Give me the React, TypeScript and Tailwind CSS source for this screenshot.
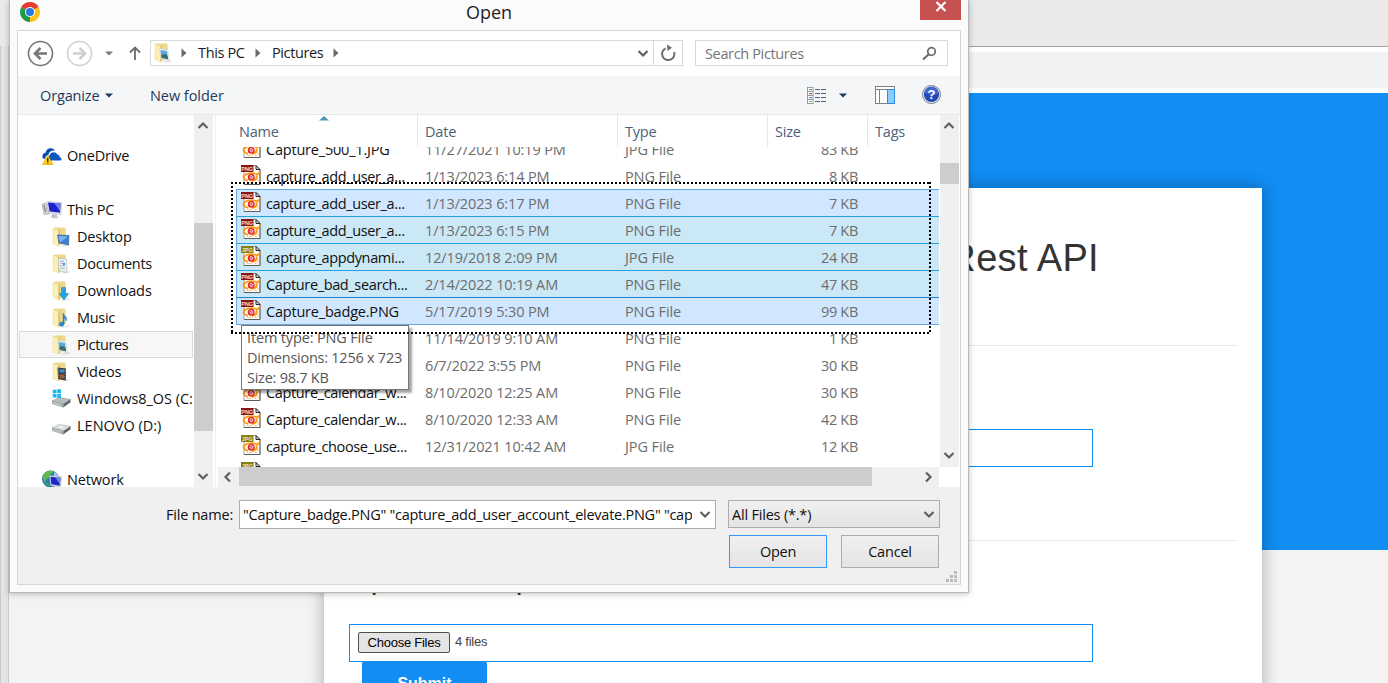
import React from "react";

type SideKind =
  | "onedrive" | "pc" | "desktop" | "documents" | "downloads"
  | "music" | "pictures" | "videos" | "osdrive" | "drive" | "network";

function Folder({ children }: { children?: React.ReactNode }) {
  return (
    <svg width="20" height="20" viewBox="0 0 20 20" className="shrink-0">
      <path d="M9 18.500l9-1.500-1 2-7 .8z" fill="#000" opacity=".1" />
      <path d="M1 1.500 3 .5h9.500l1.200 1V16L6 18z" fill="#eed88a" />
      <path d="M1 1.500 6.500 3.300V19L1 16.500z" fill="#fbefb4" stroke="#ecd68a" strokeWidth=".5" />
      <path d="M6.500 3.300 8 2.800v15.500l-1.500.7z" fill="#dcc070" />
      {children}
    </svg>
  );
}

function SideIcon({ kind }: { kind: SideKind }) {
  switch (kind) {
    case "onedrive":
      return (
        <svg width="20" height="20" viewBox="0 0 20 20" className="shrink-0">
          <path d="M1 12.500C-.5 9.500 1 7 3.500 6.700 4 3.500 7 1.500 10 2.500c1.500.4 2.300 1.200 3 2.200-4-.6-6 1.500-6.500 4C4 9 3 11 3.500 13z" fill="#0a4db0" />
          <path d="M6 14.500c-2-1-1.500-4.500 1.500-4.800C7.800 6 13.500 4.500 15.300 8.500c2 .2 2.500 1.500 2.300 2.800 2.600.6 2.300 3.200.4 3.200z" fill="#0f56bd" />
          <path d="M5.700 9.200 11 18.500H.5z" fill="#ffcf12" stroke="#e0a500" strokeWidth=".6" />
          <path d="M5.100 12h1.300v3.700H5.100zM5.100 16.400h1.300v1.200H5.100z" fill="#222" />
        </svg>
      );
    case "pc":
      return (
        <svg width="20" height="20" viewBox="0 0 20 20" className="shrink-0">
          <path d="M0 4l4-1 3 11-5 .5z" fill="#d5d8dd" stroke="#999fa8" strokeWidth=".6" />
          <path d="M1 5l1.500-.3L4.500 12 3 12.500z" fill="#8a9099" />
          <path d="M5 1.500 19.500 2.500l-.5 12L7 13z" fill="#e4e7ec" stroke="#a6abb5" strokeWidth=".5" />
          <path d="M6 2.600 18.500 3.400 18 12.700 7.600 11.500z" fill="#1c22c9" />
          <path d="M12 3l6.500.4-.5 7.500z" fill="#6d83ec" />
          <path d="M10 14l5 .6v2l2 .8-4 1-4-1z" fill="#c0c4cb" />
        </svg>
      );
    case "desktop":
      return <Folder><path d="M5.500 8l11.500.5-.5 9.500L7 16z" fill="#3f7fd2" stroke="#2a5596" strokeWidth=".6" /><path d="M6.500 9l9.500.5-8 6z" fill="#7fb0ee" /></Folder>;
    case "documents":
      return <Folder><path d="M6 4l8.500 1 .5 13.500-8-2z" fill="#eef3f8" stroke="#a4b0bd" strokeWidth=".6" /><path d="M8 7l4 .5M8 9l4 .5M8 11.500l5 .7M8 14l5 .7" stroke="#8ba0b6" strokeWidth=".8" /><path d="M11 9h2v2h-2z" fill="#3b8ed0" /></Folder>;
    case "downloads":
      return <Folder><path d="M9.500 6.500h4v6h3.200L12 19l-5-6.500h2.500z" fill="#2aa1e0" stroke="#1b7ab8" strokeWidth=".5" /></Folder>;
    case "music":
      return <Folder><path d="M11 5c.5 3 4.500 3 3.500 8-.5-2-1.500-2.500-2.300-2.700V16c-.2 3-5.200 3-5 .2.200-2 2.300-2.500 3.800-2z" fill="#2b8ad6" stroke="#1e69a8" strokeWidth=".4" /></Folder>;
    case "pictures":
      return <Folder><path d="M5.500 5.500 14 7l1.500 11L7 16z" fill="#eef6fb" stroke="#c0ccd5" strokeWidth=".5" /><path d="M6.500 7 13 8l.6 4-6.500.5z" fill="#5ea5d8" /><path d="M7.200 12.500c2-2 4-1 6.500 0l.5 4-6.700-1.500z" fill="#3c6f63" /></Folder>;
    case "videos":
      return <Folder><path d="M5.500 5.500l8.500 1v12L6 17z" fill="#31363b" /><path d="M7.500 7l5 .5v3.300l-5-.3z" fill="#3f8fc4" /><path d="M7.500 12l5 .4v4.500l-5-.9z" fill="#9b5a35" /><path d="M6.500 6.500v10.500M13.300 7.500v10.500" stroke="#bcc3c9" strokeWidth=".7" strokeDasharray="1 1.200" /></Folder>;
    case "osdrive":
    case "drive":
      return (
        <svg width="20" height="20" viewBox="0 0 20 20" className="shrink-0">
          <path d="M0 12 7 8.500l11.500 1.800-7 4.700z" fill={kind === "drive" ? "#e3e5e6" : "#b9bcbe"} stroke="#969a9c" strokeWidth=".5" />
          <path d="M0 12l11.500 3v3.300L0 14.500z" fill="#c2c5c7" stroke="#7d8183" strokeWidth=".5" />
          <path d="M11.500 15l7-4.700v3l-7 5z" fill="#5e6364" />
          <path d="M9 15.300l1.500.4v1.500L9 16.700z" fill="#4be330" />
          {kind === "drive" && <path d="M4.500 11.500l4-2 5 1-4 2.300z" fill="#f6f7f8" stroke="#b4b7ba" strokeWidth=".4" />}
          {kind === "osdrive" && <path d="M.7.700h3.800v3.600H.7zM5.200.3H9v4H5.200zM.7 5h3.800v3.700L.7 8.300zM5.200 5H9v4.100L5.200 8.700z" fill="#19b9f1" />}
        </svg>
      );
    case "network":
      return (
        <svg width="20" height="20" viewBox="0 0 20 20" className="shrink-0">
          <circle cx="8.500" cy="9" r="8.500" fill="#2c78c4" />
          <path d="M3 3c3-3 7-2.500 9-1.500C10 4 8 3.500 8 6S4 8 3.500 11 1 9 .7 7 2 4 3 3z" fill="#5dba4a" />
          <path d="M12 2c2 1 4 3 4.300 5L12 6z" fill="#9fd3ef" />
          <path d="M2 12l4 1 2 4-3-.5z" fill="#36a555" />
          <path d="M7.500 5.500 19.500 6.500l-.8 10.500L8.500 15.500z" fill="#dfe3ea" stroke="#9fa6b3" strokeWidth=".5" />
          <path d="M8.500 6.700 18.500 7.700l-.7 8-8.500-1.500z" fill="#1c28c4" />
          <path d="M13 7.200l5.500.5-.6 6.500z" fill="#6b85e8" />
          <path d="M10 16.500l6 1v1.800l-6-.6z" fill="#b8bdc6" />
        </svg>
      );
  }
}

function FileIcon({ jpg }: { jpg?: boolean }) {
  return (
    <svg width="20" height="20" viewBox="0 0 20 20" className="mb-[2px] shrink-0">
      <path d="M3 .5h12L19 4.500v15H3z" fill="#fff" stroke="#8a8a8a" strokeWidth=".8" />
      <path d="M15 .5v4h4z" fill="#e4e4e4" stroke="#222" strokeWidth="1" />
      <path d="M19 4.500v15H3" fill="none" stroke="#555" strokeWidth=".9" />
      <path d="M3.500 10.300C7 7.700 12 8 15.500 9M14.500 9.500c2.500 0 4-1.500 4.500-3.500" stroke="#fb9a13" strokeWidth="1.800" fill="none" />
      <path d="M3.800 10C1.500 12 3 15 7 15.800M15.500 10.500c1 2.500-1 5-4.500 5.500" stroke="#fb9a13" strokeWidth="2" fill="none" />
      <path d="M5.500 17.300c2.500.6 4.500.3 6-.3" stroke="#fdc47a" strokeWidth="1" fill="none" />
      <circle cx="10.200" cy="12.300" r="3.500" fill="#e02c2a" />
      <path d="M8.700 11.300c1-1.300 3.200-.8 3.200.9s-2 2.200-2.600.9c-.4-1 1-1.700 1.500-.8" fill="none" stroke="#fff" strokeWidth=".8" />
      <path d="M14 17.500h1.500M16.500 15.800h1M15.500 14.500h1" stroke="#f9a11b" strokeWidth="1.200" />
      <path d="M0 0h12.500v7H0z" fill={jpg ? "#818012" : "#85151a"} />
      <text x="6.200" y="5.500" textAnchor="middle" fontSize="5.500" fontWeight="700" fontFamily="Liberation Sans" fill="#f1dede">
        {jpg ? "JPG" : "PNG"}
      </text>
    </svg>
  );
}

function Chevron({ dir, className = "" }: { dir: "up" | "down" | "left" | "right"; className?: string }) {
  const d = { up: "M1.500 8 6 3.500 10.500 8", down: "M1.500 4 6 8.500 10.500 4", left: "M8 1.500 3.500 6 8 10.500", right: "M4 1.500 8.500 6 4 10.500" }[dir];
  return (
    <svg width="12" height="12" viewBox="0 0 12 12" className={className}>
      <path d={d} fill="none" stroke="#606060" strokeWidth="2.200" />
    </svg>
  );
}

function Crumb() {
  return <svg width="6" height="10" viewBox="0 0 6 10" className="shrink-0"><path d="M.5.500 5.500 5 .5 9.500z" fill="#6b6b6b" /></svg>;
}

const side: { kind: SideKind; label: string; child?: boolean; gap?: string; track?: string }[] = [
  { kind: "onedrive", label: "OneDrive", track: "tracking-[-0.2px]" },
  { kind: "pc", label: "This PC", gap: "mt-[27px]" },
  { kind: "desktop", label: "Desktop", child: true, track: "tracking-[-0.2px]" },
  { kind: "documents", label: "Documents", child: true },
  { kind: "downloads", label: "Downloads", child: true, track: "tracking-[-0.1px]" },
  { kind: "music", label: "Music", child: true },
  { kind: "pictures", label: "Pictures", child: true, track: "tracking-[-0.4px]" },
  { kind: "videos", label: "Videos", child: true, track: "tracking-[-0.1px]" },
  { kind: "osdrive", label: "Windows8_OS (C:", child: true, track: "tracking-[-0.05px]" },
  { kind: "drive", label: "LENOVO (D:)", child: true, track: "tracking-[0px]" },
  { kind: "network", label: "Network", gap: "mt-[27px]", track: "tracking-[-0.15px]" },
];

const files: { name: string; date: string; type: "JPG" | "PNG" | ""; size: string; sel?: "blue" | "teal" }[] = [
  { name: "Capture_500_1.JPG", date: "11/27/2021 10:19 PM", type: "JPG", size: "83 KB" },
  { name: "capture_add_user_a...", date: "1/13/2023 6:14 PM", type: "PNG", size: "8 KB" },
  { name: "capture_add_user_a...", date: "1/13/2023 6:17 PM", type: "PNG", size: "7 KB", sel: "blue" },
  { name: "capture_add_user_a...", date: "1/13/2023 6:15 PM", type: "PNG", size: "7 KB", sel: "teal" },
  { name: "capture_appdynami...", date: "12/19/2018 2:09 PM", type: "JPG", size: "24 KB", sel: "teal" },
  { name: "Capture_bad_search...", date: "2/14/2022 10:19 AM", type: "PNG", size: "47 KB", sel: "teal" },
  { name: "Capture_badge.PNG", date: "5/17/2019 5:30 PM", type: "PNG", size: "99 KB", sel: "blue" },
  { name: "", date: "11/14/2019 9:10 AM", type: "PNG", size: "1 KB" },
  { name: "", date: "6/7/2022 3:55 PM", type: "PNG", size: "30 KB" },
  { name: "Capture_calendar_w...", date: "8/10/2020 12:25 AM", type: "PNG", size: "30 KB" },
  { name: "Capture_calendar_w...", date: "8/10/2020 12:33 AM", type: "PNG", size: "42 KB" },
  { name: "capture_choose_use...", date: "12/31/2021 10:42 AM", type: "JPG", size: "12 KB" },
  { name: "", date: "", type: "", size: "" },
];

function rowTone(i: number, sel?: "blue" | "teal") {
  const bg = sel === "blue" ? "bg-[#d1e7ff]" : sel === "teal" ? "bg-[#cbe8f6]" : "";
  const top = i === 2 ? "border-t border-t-[#66a7e8]" : i === 6 ? "border-t border-t-[#1f84cf]" : sel ? "border-t border-t-[#26a0da]" : i === 7 ? "border-t border-t-[#66a7e8]" : "border-t border-t-transparent";
  return `${bg} ${top}`;
}

function Page() {
  return (
    <div className="flex h-[683px] w-[1388px] flex-col font-['Liberation_Sans',Arial,sans-serif]">
      <div className="h-[46px] shrink-0 bg-[#eaeaea]" />
      <div className="flex min-h-0 flex-1">
        <div className="w-[9px] shrink-0 border-l border-r border-[#c9c9c9] bg-[#e4e4e4]" />
        <div className="flex min-w-0 flex-1 flex-col border-t border-[#a3a3a3]">
          <div className="h-[46px] shrink-0 border-y-[5px] border-b-[#fdfdfd] border-t-white bg-[#f1f2f4]" />
          <div className="flex min-h-0 flex-1 justify-start bg-[linear-gradient(#118df3_457px,#f3f3f3_457px)] pl-[315px] pt-[95px]">
            <div className="flex h-[560px] w-[938px] shrink-0 flex-col bg-white pl-[25px] pr-[25px] shadow-[0_0_16px_rgba(0,0,0,0.3)]">
              <div className="flex h-[157px] shrink-0 items-start justify-end pr-[138px] pt-[47px] text-[38px] leading-[46px] tracking-[0.35px] text-[#333]">Rest API</div>
              <div className="h-px shrink-0 bg-[#e6e6e6]" />
              <div className="mt-[83px] h-[38px] w-[744px] shrink-0 border border-[#118df3]" />
              <div className="mt-[73px] h-px shrink-0 bg-[#e6e6e6]" />
              <div className="mt-[21px] h-[34px] shrink-0 text-[30px] leading-[34px] text-[#333]">Upload multiple</div>
              <div className="mt-[28px] flex h-[38px] w-[744px] shrink-0 items-center border border-[#118df3] pl-2">
                <button className="mb-px h-[21px] w-[92px] whitespace-nowrap rounded-[2px] border border-[#4f4f4f] bg-[#e4e4e4] text-[13px] leading-[19px] tracking-[-0.25px] text-black">Choose Files</button>
                <span className="mb-[2px] ml-[5px] text-[13px] tracking-[-0.25px] text-[#444]">4 files</span>
              </div>
              <div className="-mt-px ml-[13px] flex h-[46px] w-[125px] shrink-0 items-center justify-center rounded-t-[3px] bg-[#118df3] text-[16px] font-bold text-white">Submit</div>
            </div>
          </div>
        </div>
      </div>
    </div>
  );
}

function NavBar() {
  return (
    <div className="flex h-[45px] shrink-0 items-center bg-white pb-px pl-[9px] text-[14.500px] tracking-[-0.35px]">
      <svg width="27" height="27" viewBox="0 0 27 27"><circle cx="13.500" cy="13.500" r="12" fill="none" stroke="#767676" strokeWidth="1.600" /><path d="M20 13.500H8M13.500 8 8 13.500 13.500 19" fill="none" stroke="#767676" strokeWidth="2.600" /></svg>
      <svg width="27" height="27" viewBox="0 0 27 27" className="ml-3"><circle cx="13.500" cy="13.500" r="12" fill="none" stroke="#d0d0d0" strokeWidth="1.500" /><path d="M7 13.500H19M13.500 8 19 13.500 13.500 19" fill="none" stroke="#cfcfcf" strokeWidth="2.600" /></svg>
      <svg width="8" height="5" viewBox="0 0 8 5" className="ml-[12px]"><path d="M0 .5h8L4 4.500z" fill="#7a7a7a" /></svg>
      <svg width="12" height="14" viewBox="0 0 12 14" className="ml-[16px]"><path d="M6 14V2M1 6.500 6 1.500 11 6.500" fill="none" stroke="#6b6b6b" strokeWidth="1.800" /></svg>
      <div className="ml-[9px] flex h-[26px] w-[533px] items-center border border-[#d9d9d9] pl-[3px]">
        <SideIcon kind="pictures" />
        <span className="ml-[7px]"><Crumb /></span>
        <span className="ml-[11px] w-[48px] whitespace-nowrap pb-px text-[#1b1b1b]">This PC</span>
        <span className="ml-[9px]"><Crumb /></span>
        <span className="ml-[11px] w-[52px] whitespace-nowrap pb-px tracking-[-0.4px] text-[#1b1b1b]">Pictures</span>
        <span className="ml-[9px]"><Crumb /></span>
        <Chevron dir="down" className="ml-auto mr-[4px]" />
        <div className="flex h-full w-[29px] items-center justify-center border-l border-[#d9d9d9]">
          <svg width="17" height="18" viewBox="0 0 17 18" className="ml-px"><path d="M5.500 4.300A6.200 6.200 0 1 0 14.200 8" fill="none" stroke="#6b6b6b" strokeWidth="2" /><path d="M7 .5 12 3.700 7.500 7z" fill="#6b6b6b" /></svg>
        </div>
      </div>
      <div className="ml-3 flex h-[26px] w-[253px] items-center justify-between border border-[#d9d9d9] pl-[9px] pr-[10px] text-[#757575]">
        <span className="pt-px tracking-[-0.35px]">Search Pictures</span>
        <svg width="15" height="15" viewBox="0 0 15 15"><circle cx="9.500" cy="5.500" r="3.800" fill="none" stroke="#6f6f6f" strokeWidth="1.800" /><path d="M6.800 8.200 1 13.500" stroke="#6f6f6f" strokeWidth="2.200" /></svg>
      </div>
    </div>
  );
}

function ToolBar() {
  return (
    <div className="flex h-[39px] shrink-0 items-center border-b border-[#e3e8ee] bg-[#f5f6f7] pl-[22px] text-[14.500px] text-[#1e395b]">
      <span className="w-[65px] whitespace-nowrap pt-px tracking-[-0.15px]">Organize</span>
      <svg width="8" height="5" viewBox="0 0 8 5"><path d="M0 .5h8L4 4.500z" fill="#1e395b" /></svg>
      <span className="ml-[37px] pt-px tracking-[-0.05px]">New folder</span>
      <svg width="20" height="17" viewBox="0 0 20 17" className="ml-auto">
        {[0, 1, 2, 3].map((n) => (
          <g key={n}>
            <rect x=".5" y={0.5 + n * 4} width="5.500" height="4" fill="#fff" stroke="#8a97a5" strokeWidth=".9" />
            <rect x="2" y={2 + n * 4} width="3" height="1.200" fill={["#62a15f", "#e03a2f", "#4a92e8", "#a5c22b"][n]} />
            <path d={`M8 ${2.500 + n * 4}h5M14 ${2.500 + n * 4}h5`} stroke="#4f6480" strokeWidth="1" />
          </g>
        ))}
      </svg>
      <svg width="8" height="5" viewBox="0 0 8 5" className="ml-[12px]"><path d="M0 .5h8L4 4.500z" fill="#1e395b" /></svg>
      <svg width="20" height="18" viewBox="0 0 20 18" className="ml-[28px]">
        <rect x=".5" y=".5" width="19" height="17" fill="#fff" stroke="#808080" />
        <path d="M.5 3.500h19M4.500 3.500v14" stroke="#808080" />
        <rect x="12.500" y="3.500" width="7" height="14" fill="#8ecbfb" stroke="#2d8ce6" />
      </svg>
      <svg width="20" height="20" viewBox="0 0 20 20" className="ml-[27px] mr-[18px]">
        <circle cx="9.500" cy="9.500" r="9.100" fill="#dcdfe6" stroke="#77808e" strokeWidth=".9" />
        <circle cx="9.500" cy="9.500" r="7.600" fill="#2447b5" />
        <path d="M2.500 8.500a7 7 0 0 1 14 0c-3 1.500-9 1.500-14 0z" fill="#4166cc" />
        <text x="9.500" y="14.300" textAnchor="middle" fontSize="13" fontWeight="700" fontFamily="Liberation Sans" fill="#fff">?</text>
      </svg>
    </div>
  );
}

function Sidebar() {
  return (
    <div className="flex w-[198px] shrink-0 border-r border-[#f0f0f0] bg-white">
      <div className="flex w-[176px] flex-col overflow-hidden pl-px pr-px pt-[27px]">
        {side.map((s) => (
          <div key={s.label} className={`flex h-[27px] shrink-0 items-center overflow-hidden border text-[14.500px] text-[#111] ${s.gap ?? ""} ${s.child ? "pl-[32px]" : "pl-[22px]"} ${s.kind === "pictures" ? "border-[#d9d9d9] bg-[#f7f7f7]" : "border-transparent"}`}>
            <SideIcon kind={s.kind} />
            <span className={`ml-[5px] whitespace-nowrap ${s.track ?? "tracking-[-0.3px]"}`}>{s.label}</span>
          </div>
        ))}
      </div>
      <div className="flex w-[19px] flex-col items-center bg-[#f0f0f0]">
        <Chevron dir="up" className="mr-px mt-[5px] shrink-0" />
        <div className="mt-[91px] h-[208px] w-full shrink-0 bg-[#cdcdcd]" />
        <Chevron dir="down" className="mb-[5px] mr-px mt-auto shrink-0" />
      </div>
    </div>
  );
}

function FileList() {
  return (
    <div className="flex min-w-0 flex-1 flex-col bg-white">
      <div className="flex min-h-0 flex-1">
        <div className="flex w-[723px] shrink-0 flex-col">
          <div className="flex h-[32px] shrink-0 text-[14.500px] leading-[34px] tracking-[-0.2px] text-[#4c607a]">
            <div className="relative w-[202px] border-r border-[#e3e8ee] pl-[23px]">
              Name
              <svg width="10" height="5" viewBox="0 0 10 5" className="absolute left-[103px] top-[1px]"><path d="M0 4.500 5 0l5 4.500z" fill="#4f97b8" /></svg>
            </div>
            <div className="w-[200px] border-r border-[#e3e8ee] pl-[7px]">Date</div>
            <div className="w-[150px] border-r border-[#e3e8ee] pl-[7px]">Type</div>
            <div className="w-[100px] border-r border-[#e3e8ee] pl-[7px]">Size</div>
            <div className="pl-[7px]">Tags</div>
          </div>
          <div className="min-h-0 flex-1 overflow-hidden">
            <div className="-mt-3 flex flex-col pl-[20px]">
              {files.map((f, i) => (
                <div key={i} className={`flex h-[27px] shrink-0 items-center whitespace-nowrap text-[14.500px] leading-[22px] text-[#6d6d6d] ${rowTone(i, f.sel)} ${f.sel ? "border-l border-l-[#66a7e8] pl-[4px]" : "pl-[5px]"}`}>
                  <FileIcon jpg={f.type !== "PNG"} />
                  <span className={`ml-[5px] w-[159px] pt-[2px] text-[#111] ${f.name.endsWith("...") ? "tracking-[-0.36px]" : "tracking-[-0.2px]"}`}>{f.name}</span>
                  <span className="w-[200px] pt-[2px] tracking-[-0.13px]">{f.date}</span>
                  <span className="w-[150px] pt-[2px] tracking-[-0.1px]">{f.type && `${f.type} File`}</span>
                  <span className="w-[83px] pt-[2px] text-right tracking-[-0.3px]">{f.size}</span>
                </div>
              ))}
            </div>
          </div>
        </div>
        <div className="ml-px flex w-[19px] shrink-0 flex-col items-center bg-[#f0f0f0]">
          <Chevron dir="up" className="mr-px mt-[5px] shrink-0" />
          <div className="mt-[31px] h-[21px] w-full shrink-0 bg-[#cdcdcd]" />
          <Chevron dir="down" className="mb-[6px] mr-px mt-auto shrink-0" />
        </div>
      </div>
      <div className="flex h-5 shrink-0">
        <div className="ml-[2px] flex w-[721px] items-center bg-[#f0f0f0]">
          <Chevron dir="left" className="ml-[4px]" />
          <div className="mb-px ml-[5px] h-[19px] w-[633px] bg-[#cdcdcd]" />
          <Chevron dir="right" className="ml-[50px]" />
        </div>
      </div>
    </div>
  );
}

function Footer() {
  return (
    <div className="flex flex-1 flex-col bg-[#f0f0f0] pt-[13px] text-[14.500px] text-[#111]">
      <div className="flex h-[28px] items-center">
        <span className="w-[215px] pt-px text-right tracking-[-0.2px]">File name:</span>
        <div className="ml-[6px] flex h-[29px] w-[477px] items-center border border-[#abadb3] bg-white pl-[3px]">
          <span className="w-[449px] overflow-hidden whitespace-nowrap pt-px tracking-[-0.26px]">"Capture_badge.PNG" "capture_add_user_account_elevate.PNG" "cap</span>
          <Chevron dir="down" className="ml-[7px]" />
        </div>
        <div className="ml-3 flex h-[28px] w-[212px] items-center justify-between border border-[#acacac] bg-gradient-to-b from-[#f0f0f0] to-[#e4e4e4] pl-[3px] pr-[4px]">
          <span className="pt-px tracking-[-0.2px]">All Files (*.*)</span>
          <Chevron dir="down" />
        </div>
      </div>
      <div className="mt-[7px] flex pl-[711px]">
        <button className="h-[33px] w-[98px] border border-[#3399ff] bg-gradient-to-b from-[#f0f0f0] to-[#e4e4e4] tracking-[-0.3px]">Open</button>
        <button className="ml-[14px] h-[33px] w-[98px] border border-[#acacac] bg-gradient-to-b from-[#f0f0f0] to-[#e4e4e4] tracking-[-0.2px]">Cancel</button>
      </div>
      <svg width="12" height="12" viewBox="0 0 12 12" className="ml-auto mr-[2px] mt-[3px]">
        <path d="M8 0h3v3H8zM4 4h3v3H4zM8 4h3v3H8zM0 8h3v3H0zM4 8h3v3H4zM8 8h3v3H8z" fill="#bcbcbc" />
      </svg>
    </div>
  );
}

function Dialog() {
  return (
    <div className="absolute left-[9px] top-0 flex h-[593px] w-[960px] flex-col border border-t-0 border-[#b9b9b9] bg-[#fbfbfb] px-[7px] pb-[7px] font-['Open_Sans','Noto_Sans',sans-serif] shadow-[0_1px_6px_rgba(0,0,0,0.25)]">
      <div className="flex h-[30px] shrink-0 items-start">
        <svg width="20" height="20" viewBox="0 0 20 20" className="ml-[3px] mt-[2px]">
          <path d="M10 10 1.340 5A10 10 0 0 1 18.660 5z" fill="#e33b2e" />
          <path d="M10 10 18.660 5A10 10 0 0 1 10 20z" fill="#fcc31a" />
          <path d="M10 10V20A10 10 0 0 1 1.340 5z" fill="#219a48" />
          <circle cx="10" cy="10" r="5" fill="#fff" />
          <circle cx="10" cy="10" r="4" fill="#2879e8" />
        </svg>
        <span className="flex-1 text-center text-[18px] leading-[25px] tracking-[0px] text-[#222]"><span className="ml-[18px]">Open</span></span>
        <div className="flex h-[20px] w-[41px] justify-center bg-[#c75050]">
          <svg width="12" height="12" viewBox="0 0 12 12"><path d="M1.500 2 10.500 11M10.500 2 1.500 11" stroke="#fff" strokeWidth="2.200" /></svg>
        </div>
      </div>
      <div className="flex min-h-0 flex-1 flex-col border border-[#d5d6d8]">
        <NavBar />
        <ToolBar />
        <div className="flex h-[372px] shrink-0">
          <Sidebar />
          <FileList />
        </div>
        <Footer />
      </div>
    </div>
  );
}

export default function App() {
  return (
    <div className="relative h-[683px] w-[1388px] overflow-hidden">
      <Page />
      <Dialog />
      <div className="absolute left-[241px] top-[325px] h-[65px] w-[168px] border border-[#767676] bg-white pl-[5px] pt-[2px] font-['Open_Sans','Noto_Sans',sans-serif] text-[14.500px] leading-5 tracking-[-0.25px] text-[#575757] shadow-[3px_3px_2px_rgba(0,0,0,0.35)]">
        <div className="tracking-[-0.15px]">Item type: PNG File</div>
        <div>Dimensions: 1256 x 723</div>
        <div>Size: 98.7 KB</div>
      </div>
      <div className="absolute left-[231px] top-[182px] h-[152px] w-[700px] bg-[repeating-linear-gradient(90deg,#000_0_2px,transparent_2px_4px),repeating-linear-gradient(90deg,#000_0_2px,transparent_2px_4px),repeating-linear-gradient(180deg,#000_0_2px,transparent_2px_4px),repeating-linear-gradient(180deg,#000_0_2px,transparent_2px_4px)] bg-[length:100%_2px,100%_2px,2px_100%,2px_100%] bg-[position:top,bottom,left,right] bg-no-repeat" />
    </div>
  );
}
